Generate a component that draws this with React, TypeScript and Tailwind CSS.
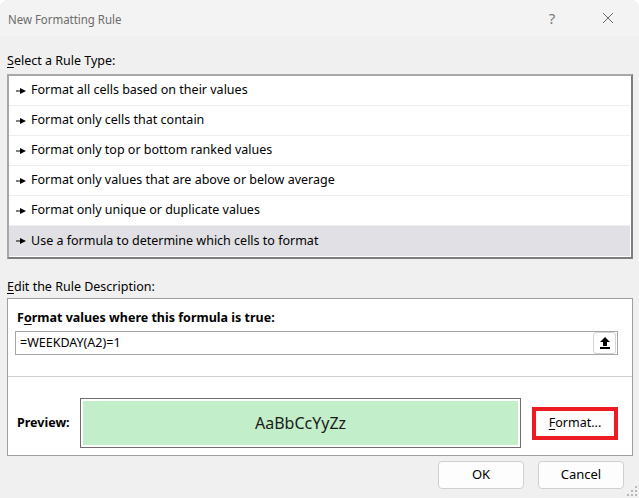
import React from 'react';

const rules = [
  'Format all cells based on their values',
  'Format only cells that contain',
  'Format only top or bottom ranked values',
  'Format only values that are above or below average',
  'Format only unique or duplicate values',
  'Use a formula to determine which cells to format',
];

function Pointer() {
  return (
    <svg width="10" height="6" viewBox="0 0 10 6" className="shrink-0">
      <path d="M0 2.5h5v1H0z" fill="#000" />
      <path d="M4 0l6 3-6 3z" fill="#000" />
    </svg>
  );
}

function Grip() {
  return (
    <svg width="12" height="12" viewBox="0 0 12 12" className="absolute right-[1px] bottom-[1px]">
      <g fill="#b9b9b9">
        <rect x="9" y="1" width="2" height="2" />
        <rect x="5" y="5" width="2" height="2" />
        <rect x="9" y="5" width="2" height="2" />
        <rect x="1" y="9" width="2" height="2" />
        <rect x="5" y="9" width="2" height="2" />
        <rect x="9" y="9" width="2" height="2" />
      </g>
    </svg>
  );
}

export default function App() {
  return (
    <div
      className="relative w-[639px] h-[498px] bg-[#f0f0f0] text-black overflow-hidden rounded-t-[8px]"
      style={{ fontFamily: '"Noto Sans", "Open Sans", sans-serif' }}
    >
      {/* title bar */}
      <div className="flex items-center h-[36px] bg-[#f3f3f3] pl-[8px]">
        <div className="flex-1">
          <span className="inline-block origin-left scale-x-[0.88] text-[13px] text-[#6b6b6b]">New Formatting Rule</span>
        </div>
        <span className="text-[15px] text-[#7a7a7a] w-[20px] text-center mr-[40px]">?</span>
        <svg width="12" height="12" viewBox="0 0 12 12" className="mr-[25px]">
          <path d="M1 1l10 10M11 1L1 11" stroke="#6b6b6b" strokeWidth="1" fill="none" />
        </svg>
      </div>

      <div className="px-[7px]">
        <div className="mt-[17px] h-[16px] text-[12.5px] leading-[16px]">
          <span className="underline underline-offset-2">S</span>elect a Rule Type:
        </div>

        <div className="mt-[5px] w-[626px] border-2 border-[#7d7d7d] border-l-[#a8a8a8] border-t-[#a8a8a8] bg-white pb-[1px]">
          {rules.map((r, i) => (
            <div
              key={r}
              className={
                'flex items-center gap-[5px] h-[30px] pl-[7px] text-[12.5px] mr-[1px] ' +
                (i === 5 ? 'bg-[#e1e0e5]' : 'border-b border-[#eeeeee]')
              }
            >
              <Pointer />
              <span>{r}</span>
            </div>
          ))}
        </div>

        <div className="mt-[20px] h-[16px] text-[12.5px] leading-[16px]">
          <span className="underline underline-offset-2">E</span>dit the Rule Description:
        </div>

        <div className="mt-[3px] w-[626px] h-[158px] border border-[#a0a0a0] bg-white">
          <div className="pl-[9px] pt-[11px] h-[16px] box-content text-[12.5px] leading-[16px] font-bold">
            F<span className="underline underline-offset-2">o</span>rmat values where this formula is true:
          </div>
          <div className="ml-[7px] mt-[5px] w-[603px] h-[24px] border border-[#a6a6a6] flex items-center pl-[4px] pr-[1px]">
            <span className="flex-1 text-[12.5px]">=WEEKDAY(A2)=1</span>
            <div className="w-[23px] h-[22px] border border-[#d4d4d4] rounded-[3px] flex items-center justify-center bg-white">
              <svg width="12" height="14" viewBox="0 0 12 14">
                <path d="M6 1L1 6h3v4h4V6h3z" fill="#000" />
                <rect x="1" y="11" width="10" height="2" fill="#000" />
              </svg>
            </div>
          </div>
          <div className="mt-[21px] h-[1px] bg-[#cfcfcf]" />
          <div className="flex items-center mt-[21px]">
            <span className="pl-[9px] w-[72px] text-[12.5px] font-bold">Preview:</span>
            <div className="w-[441px] h-[50px] border border-[#6e6e6e] p-[2px] bg-white">
              <div className="w-full h-full bg-[#c2eec9] flex items-center justify-center text-[16px] text-[#1a1a1a]">
                AaBbCcYyZz
              </div>
            </div>
            <div className="ml-[11px] w-[86px] h-[33px] border-4 border-[#ed1c24] bg-[#fdfdfd] flex items-center justify-center text-[12.5px]">
              <span>
                <span className="underline underline-offset-2">F</span>ormat...
              </span>
            </div>
          </div>
        </div>

        <div className="flex justify-end gap-[14px] mt-[5px] pr-[8px]">
          <div className="w-[86px] h-[28px] rounded-[4px] border border-[#d0d0d0] bg-[#fdfdfd] flex items-center justify-center text-[13px]">
            OK
          </div>
          <div className="w-[86px] h-[28px] rounded-[4px] border border-[#d0d0d0] bg-[#fdfdfd] flex items-center justify-center text-[13px]">
            Cancel
          </div>
        </div>
      </div>
      <Grip />
    </div>
  );
}
